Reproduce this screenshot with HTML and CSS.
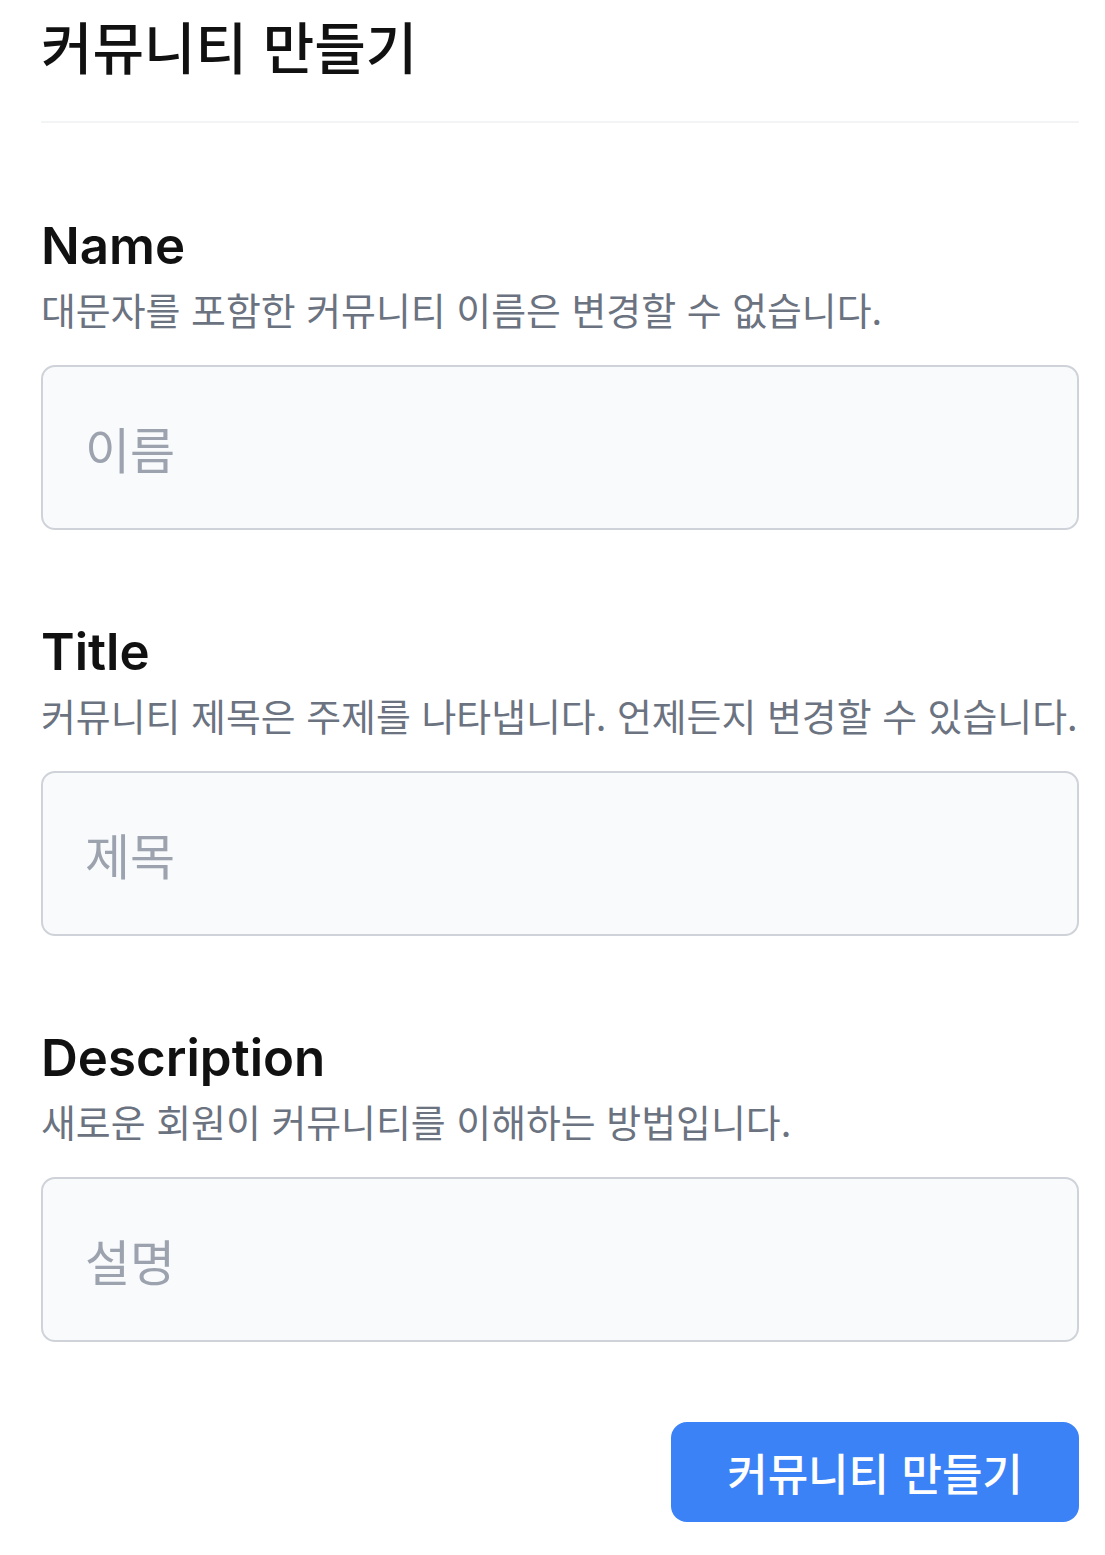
FILE: index.html
```html
<!DOCTYPE html>
<html lang="ko">
<head>
<meta charset="utf-8">
<title>커뮤니티 만들기</title>
<link rel="stylesheet" href="styles.css">
</head>
<body>
<main class="page">
  <h1 class="title">커뮤니티 만들기</h1>
  <hr class="divider">
  <form class="form">
    <div class="field">
      <label class="label" for="name">Name</label>
      <p class="hint">대문자를 포함한 커뮤니티 이름은 변경할 수 없습니다.</p>
      <input class="input" id="name" type="text" placeholder="이름">
    </div>
    <div class="field">
      <label class="label" for="title">Title</label>
      <p class="hint">커뮤니티 제목은 주제를 나타냅니다. 언제든지 변경할 수 있습니다.</p>
      <input class="input" id="title" type="text" placeholder="제목">
    </div>
    <div class="field">
      <label class="label" for="desc">Description</label>
      <p class="hint">새로운 회원이 커뮤니티를 이해하는 방법입니다.</p>
      <input class="input" id="desc" type="text" placeholder="설명">
    </div>
    <div class="actions">
      <button class="btn" type="button">커뮤니티 만들기</button>
    </div>
  </form>
</main>
</body>
</html>
```

FILE: styles.css
```css
* {
  box-sizing: border-box;
}

html, body {
  margin: 0;
  padding: 0;
  background: #ffffff;
}

body {
  font-family: "Noto Sans CJK KR", "Noto Sans", sans-serif;
  color: #111111;
}

.page {
  width: 1038px;
  margin-left: 41px;
  padding-top: 13px;
}

.title {
  margin: 0;
  font-size: 56px;
  line-height: 64px;
  font-weight: 500;
  color: #111111;
  white-space: nowrap;
}

.divider {
  margin: 44px 0 0;
  border: 0;
  height: 2px;
  background: #f3f4f6;
}

.form {
  display: flex;
  flex-direction: column;
  gap: 92px;
  padding-top: 93px;
}

.field {
  display: flex;
  flex-direction: column;
}

.label {
  display: block;
  font-family: Inter, "Noto Sans CJK KR", sans-serif;
  font-size: 51px;
  line-height: 60px;
  font-weight: 600;
  color: #111111;
}

.hint {
  margin: 11px 0 0;
  font-size: 37.9px;
  line-height: 44px;
  color: #6b7280;
  white-space: nowrap;
}

.input {
  margin-top: 34px;
  width: 100%;
  height: 165px;
  padding: 0 42px;
  border: 2px solid #cfd3d9;
  border-radius: 14px;
  background: #f9fafb;
  font-family: "Noto Sans CJK KR", sans-serif;
  font-size: 49px;
  color: #111111;
  outline: none;
}

.input::placeholder {
  color: #9ca3af;
}

.actions {
  display: flex;
  justify-content: flex-end;
  margin-top: -12px;
}

.btn {
  width: 408px;
  height: 100px;
  border: 0;
  border-radius: 16px;
  background: #3b82f6;
  color: #ffffff;
  font-family: "Noto Sans CJK KR", sans-serif;
  font-size: 44px;
  font-weight: 500;
  cursor: pointer;
}
```
